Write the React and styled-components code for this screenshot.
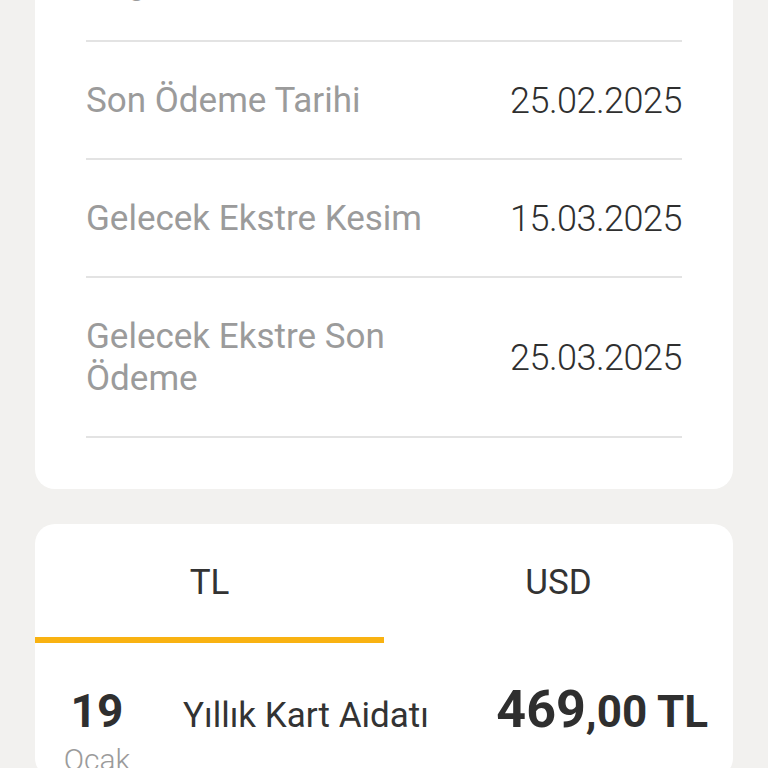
import React from "react";
import styled, { createGlobalStyle } from "styled-components";

const GlobalStyle = createGlobalStyle`
  html, body {
    margin: 0;
    padding: 0;
    background: #f2f1ef;
    font-family: Roboto, "Liberation Sans", sans-serif;
    overflow: hidden;
  }
`;

const details = [
  { label: "Asgari Ödeme Tutarı", value: "1.876 TL" },
  { label: "Son Ödeme Tarihi", value: "25.02.2025" },
  { label: "Gelecek Ekstre Kesim", value: "15.03.2025" },
  { label: "Gelecek Ekstre Son Ödeme", value: "25.03.2025" },
];

const App = () => {
  return (
    <>
      <GlobalStyle />
      <Page>
        <Card>
          <DetailList>
            {details.map((d) => (
              <DetailRow key={d.label}>
                <Label>{d.label}</Label>
                <Value>{d.value}</Value>
              </DetailRow>
            ))}
          </DetailList>
        </Card>

        <Card>
          <Tabs>
            <Tab active>TL</Tab>
            <Tab>USD</Tab>
          </Tabs>
          <Transaction>
            <DateCol>
              <Day>19</Day>
              <Month>Ocak</Month>
            </DateCol>
            <Description>Yıllık Kart Aidatı</Description>
            <Amount>
              <Whole>469</Whole>
              <Fraction>,00 TL</Fraction>
            </Amount>
          </Transaction>
        </Card>
      </Page>
    </>
  );
};

export default App;

const Page = styled.div`
  display: flex;
  flex-direction: column;
  gap: 35px;
  padding: 0 35px;
  margin-top: -76px;
`;

const Card = styled.div`
  background: #ffffff;
  border-radius: 20px;
  overflow: hidden;
`;

const DetailList = styled.div`
  padding: 0 51px 51px;
`;

const DetailRow = styled.div`
  display: flex;
  justify-content: space-between;
  align-items: center;
  padding: 38px 0 36px;
  border-bottom: 2px solid #e3e3e3;
`;

const Label = styled.div`
  max-width: 360px;
  font-size: 35px;
  line-height: 42px;
  color: #9b9b9b;
`;

const Value = styled.div`
  font-size: 36px;
  line-height: 42px;
  font-weight: 300;
  color: #2f2f2f;
  letter-spacing: -0.5px;
  white-space: nowrap;
`;

const Tabs = styled.div`
  display: grid;
  grid-template-columns: 1fr 1fr;
`;

const Tab = styled.div`
  height: 119px;
  padding-top: 38px;
  box-sizing: border-box;
  text-align: center;
  font-size: 35px;
  line-height: 42px;
  color: #333333;
  border-bottom: 6px solid ${(p) => (p.active ? "#f9b211" : "transparent")};
`;

const Transaction = styled.div`
  display: flex;
  align-items: baseline;
  padding: 36px 25px 0 26px;
`;

const DateCol = styled.div`
  width: 72px;
  display: flex;
  flex-direction: column;
  align-items: center;
`;

const Day = styled.div`
  font-size: 46px;
  line-height: 50px;
  font-weight: 700;
  color: #2f2f2f;
`;

const Month = styled.div`
  margin-top: 6px;
  font-size: 30px;
  line-height: 36px;
  font-weight: 300;
  color: #9b9b9b;
`;

const Description = styled.div`
  flex: 1;
  margin-left: 50px;
  font-size: 35px;
  color: #333333;
`;

const Amount = styled.div`
  font-weight: 700;
  color: #2f2f2f;
  white-space: nowrap;
`;

const Whole = styled.span`
  font-size: 52px;
`;

const Fraction = styled.span`
  font-size: 44px;
`;
